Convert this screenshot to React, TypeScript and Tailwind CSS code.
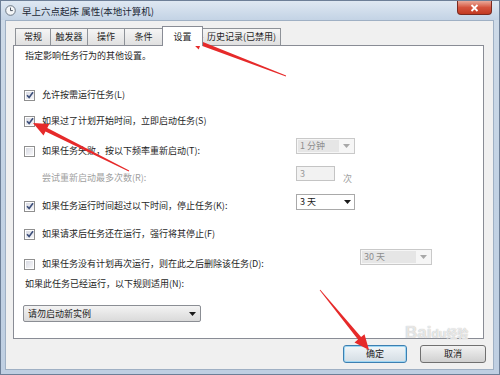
import React from "react";

type Pt = [number, number];

// red annotation arrows drawn over the dialog: tip, tail
const ARROWS: { tip: Pt; tail: Pt }[] = [
  { tip: [186, 37], tail: [285, 75] },
  { tip: [32, 122], tail: [128, 170] },
  { tip: [368, 349], tail: [319, 289] },
];

function arrowPoints(tip: Pt, tail: Pt) {
  const dx = tail[0] - tip[0];
  const dy = tail[1] - tip[1];
  const len = Math.hypot(dx, dy);
  const ux = dx / len;
  const uy = dy / len;
  const nx = -uy;
  const ny = ux;
  const head = 15;
  const hw = 6.5;
  const sw = 2;
  const tw = 0.4;
  const bx = tip[0] + ux * head;
  const by = tip[1] + uy * head;
  const p = (x: number, y: number) => `${x.toFixed(1)},${y.toFixed(1)}`;
  return [
    p(tip[0], tip[1]),
    p(bx + nx * hw, by + ny * hw),
    p(bx + nx * sw, by + ny * sw),
    p(tail[0] + nx * tw, tail[1] + ny * tw),
    p(tail[0] - nx * tw, tail[1] - ny * tw),
    p(bx - nx * sw, by - ny * sw),
    p(bx - nx * hw, by - ny * hw),
  ].join(" ");
}

const Caret = ({ color = "#1a1a1a" }: { color?: string }) => (
  <svg width="7" height="4" viewBox="0 0 7 4">
    <polygon points="0,0 7,0 3.5,4" fill={color} />
  </svg>
);

const Checkbox = ({ checked }: { checked?: boolean }) => (
  <span className="w-[11px] h-[11px] shrink-0 border border-[#8f8f8f] bg-white p-px flex">
    <span className="flex-1 bg-gradient-to-br from-[#d9dbe3] to-[#f7f7f9] flex items-center justify-center">
      {checked && (
        <svg width="8" height="8" viewBox="0 0 8 8">
          <path d="M1 4.2 L3.1 6.4 L7 1.2" fill="none" stroke="#3d4f7a" strokeWidth="1.6" />
        </svg>
      )}
    </span>
  </span>
);

const Row = ({ checked, children }: { checked?: boolean; children: React.ReactNode }) => (
  <div className="flex items-center gap-[7px] h-[12px]">
    <Checkbox checked={checked} />
    <span className="whitespace-nowrap text-[#1e1e1e]">{children}</span>
  </div>
);

const Combo = ({
  label,
  w,
  disabled,
}: {
  label: string;
  w: string;
  disabled?: boolean;
}) =>
  disabled ? (
    <div className={`${w} h-[16px] shrink-0 border border-[#c9c9c9] bg-[#f6f6f6] flex items-center p-px`}>
      <span className="flex-1 h-full bg-[#e6e6e6] text-[#8e8e8e] pl-[2px] flex items-center">{label}</span>
      <span className="w-[14px] flex justify-center">
        <Caret color="#a8a8a8" />
      </span>
    </div>
  ) : (
    <div className={`${w} h-[16px] shrink-0 border border-[#a9a9a9] bg-white flex items-center`}>
      <span className="flex-1 text-[#1a1a1a] pl-[3px]">{label}</span>
      <span className="w-[14px] flex justify-center">
        <Caret />
      </span>
    </div>
  );

const TABS = [
  { label: "常规", w: "w-[36px]" },
  { label: "触发器", w: "w-[38px]" },
  { label: "操作", w: "w-[38px]" },
  { label: "条件", w: "w-[39px]" },
  { label: "设置", w: "w-[41px]", active: true },
  { label: "历史记录(已禁用)", w: "w-[79px]" },
];

export default function App() {
  return (
    <div className="relative w-[500px] h-[375px] overflow-hidden bg-gradient-to-b from-[#cfdbe8] via-[#c2d2e4] to-[#bfcfe2] border border-[#6d7f97] font-['Noto_Sans_CJK_SC','Noto_Sans',sans-serif] text-[9px] leading-[12px] select-none">
      {/* title bar */}
      <div className="h-[19px] flex items-center bg-gradient-to-b from-[#dfe8f2] to-[#c3d3e5]">
        <svg className="ml-[4px]" width="11" height="11" viewBox="0 0 11 11">
          <circle cx="5.5" cy="5.5" r="4.8" fill="#f4f6f8" stroke="#5f6b78" strokeWidth="0.9" />
          <path d="M5.5 2.6 V5.6 H7.8" fill="none" stroke="#3b4450" strokeWidth="0.9" />
        </svg>
        <span className="ml-[6px] text-[9.5px] text-[#1b2735]">早上六点起床 属性(本地计算机)</span>
        <div className="ml-auto mr-[7px] self-start w-[35px] h-[14px] rounded-b-[4px] border border-t-0 border-[#7a2a20] bg-gradient-to-b from-[#e9a99a] via-[#d4533d] to-[#c23a22] flex items-center justify-center">
          <svg width="9" height="8" viewBox="0 0 9 8">
            <path d="M1.5 1 L7.5 7 M7.5 1 L1.5 7" stroke="#ffffff" strokeWidth="1.8" />
          </svg>
        </div>
      </div>

      {/* client area */}
      <div className="ml-[4px] w-[489px] h-[350px] bg-[#f0f0f0] border border-[#9fb0c4] pt-[5px]">
        {/* tabs */}
        <div className="ml-[9px] h-[19px] flex items-end">
          {TABS.map((t, i) =>
            t.active ? (
              <div
                key={i}
                className={`${t.w} -ml-px h-[20px] -mb-px relative z-10 bg-white border border-b-0 border-[#898c95] flex items-center justify-center text-[#1e1e1e]`}
              >
                {t.label}
              </div>
            ) : (
              <div
                key={i}
                className={`${t.w} ${i === 0 ? "" : "-ml-px"} h-[17px] bg-gradient-to-b from-[#f5f5f5] to-[#e0e0e0] border border-b-0 border-[#8e9298] flex items-center justify-center text-[#1e1e1e]`}
              >
                {t.label}
              </div>
            )
          )}
        </div>

        {/* panel */}
        <div className="ml-[7px] w-[471px] h-[294px] bg-white border border-[#898c95] flex flex-col pl-[10px] pt-[4px] text-[#1e1e1e]">
          <div className="h-[12px] pl-px">指定影响任务行为的其他设置。</div>

          <div className="mt-[27px]">
            <Row checked>允许按需运行任务(L)</Row>
          </div>
          <div className="mt-[14px]">
            <Row checked>如果过了计划开始时间，立即启动任务(S)</Row>
          </div>

          <div className="mt-[11px] flex items-start">
            <div className="w-[272px] pt-[7px]">
              <Row>如果任务失败，按以下频率重新启动(T):</Row>
            </div>
            <Combo label="1 分钟" w="w-[59px]" disabled />
          </div>

          <div className="mt-[9px] flex items-start">
            <div className="w-[272px] pt-[6px] pl-[18px] text-[#a0a0a0]">尝试重新启动最多次数(R):</div>
            <div className="w-[39px] h-[15px] border border-[#c4c4c4] bg-[#f2f2f2] text-[#9a9a9a] pl-[3px] flex items-center">3</div>
            <span className="ml-[8px] pt-[7px] text-[#a0a0a0]">次</span>
          </div>

          <div className="mt-[9px] flex items-start">
            <div className="w-[272px] pt-[6px]">
              <Row checked>如果任务运行时间超过以下时间，停止任务(K):</Row>
            </div>
            <Combo label="3 天" w="w-[59px]" />
          </div>

          <div className="mt-[16px]">
            <Row checked>如果请求后任务还在运行，强行将其停止(F)</Row>
          </div>

          <div className="mt-[9px] flex items-start">
            <div className="w-[336px] pt-[9px]">
              <Row>如果任务没有计划再次运行，则在此之后删除该任务(D):</Row>
            </div>
            <Combo label="30 天" w="w-[72px]" disabled />
          </div>

          <div className="mt-[8px] h-[12px] pl-px">如果此任务已经运行，以下规则适用(N):</div>

          <div className="mt-[15px] -ml-px w-[178px] h-[17px] rounded-[2px] border border-[#8b8e94] bg-gradient-to-b from-[#f3f3f3] to-[#dadada] flex items-center">
            <span className="flex-1 pl-[4px] text-[#1a1a1a]">请勿启动新实例</span>
            <span className="w-[16px] flex justify-center">
              <Caret />
            </span>
          </div>
        </div>

        {/* buttons */}
        <div className="mt-[6px] flex justify-end gap-[13px] pr-[7px]">
          <button className="w-[64px] h-[18px] rounded-[3px] border border-[#3c7fb1] bg-gradient-to-b from-[#f1f6f9] to-[#d4dde4] shadow-[inset_0_0_0_1px_#9ed6f3] text-[#1a1a1a] text-[9px] leading-[12px]">
            确定
          </button>
          <button className="w-[66px] h-[18px] rounded-[3px] border border-[#707070] bg-gradient-to-b from-[#f2f2f2] to-[#d0d0d0] text-[#1a1a1a] text-[9px] leading-[12px]">
            取消
          </button>
        </div>
      </div>

      {/* faint watermark, kept above the button labels */}
      <div className="absolute left-[404px] top-[322px] text-[17px] leading-[19px] font-['Liberation_Sans',sans-serif] font-bold text-white/70 [text-shadow:0_0_1px_#a8a8a8] pointer-events-none">
        Bai<span className="text-[12px]">du</span>
        <span className="text-[11px] font-['Noto_Sans_CJK_SC',sans-serif]">经验</span>
      </div>

      {/* red annotation arrows */}
      <svg className="absolute inset-0 pointer-events-none" width="500" height="375">
        {ARROWS.map((a, i) => (
          <polygon key={i} points={arrowPoints(a.tip, a.tail)} fill="#e62a2a" />
        ))}
      </svg>
    </div>
  );
}
